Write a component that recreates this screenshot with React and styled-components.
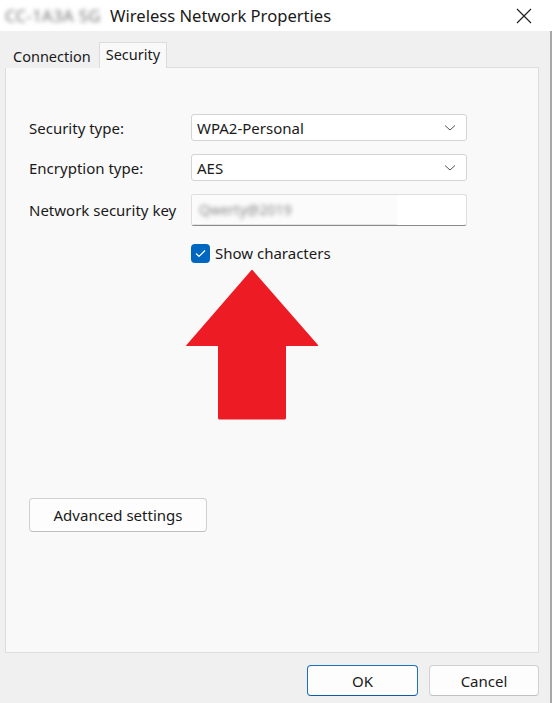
import React from 'react';
import styled, { createGlobalStyle } from 'styled-components';

const GlobalStyle = createGlobalStyle`
  html, body {
    margin: 0;
    padding: 0;
    background: #f0f0f0;
  }
  body {
    font-family: "Noto Sans", "Open Sans", Arial, sans-serif;
    color: #1a1a1a;
  }
`;

const Window = styled.div`
  position: relative;
  width: 552px;
  height: 703px;
  display: flex;
  flex-direction: column;
  overflow: hidden;
`;

const TitleBar = styled.div`
  height: 31px;
  background: #fff;
  display: flex;
  align-items: center;
  padding-left: 5px;
  font-size: 16.6px;
  flex-shrink: 0;
`;

const Blurred = styled.span`
  color: ${p => p.color || '#777'};
  filter: blur(${p => p.amount || 1.6}px);
  margin-right: ${p => p.gap || 0}px;
  letter-spacing: ${p => p.spacing || 0}px;
`;

const CloseBtn = styled.div`
  margin-left: auto;
  width: 46px;
  height: 31px;
  display: flex;
  align-items: center;
  justify-content: center;
  margin-right: 5px;
`;

const Body = styled.div`
  flex: 1;
  background: #f0f0f0;
  border-right: 2px solid #a8a8a8;
  padding: 10px 11px 0 5px;
  display: flex;
  flex-direction: column;
`;

const TabStrip = styled.div`
  display: flex;
  align-items: flex-end;
  height: 26px;
`;

const Tab = styled.div`
  font-size: 14.5px;
  padding: 0 ${p => (p.active ? 6 : 7)}px;
  height: ${p => (p.active ? 26 : 24)}px;
  line-height: ${p => (p.active ? 23 : 22)}px;
  background: ${p => (p.active ? '#f9f9f9' : '#f0f0f0')};
  border: 1px solid ${p => (p.active ? '#dcdcdc' : 'transparent')};
  border-bottom: none;
  margin-bottom: -1px;
  position: relative;
  z-index: 1;
  box-sizing: border-box;
`;

const Panel = styled.div`
  height: 586px;
  background: #f9f9f9;
  border: 1px solid #dcdcdc;
  box-sizing: border-box;
  padding: 46px 0 0 23px;
  display: flex;
  flex-direction: column;
`;

const FormGrid = styled.div`
  display: grid;
  grid-template-columns: 162px 276px;
  row-gap: 13px;
  align-items: center;
`;

const Label = styled.div`
  font-size: 15px;
  color: #1a1a1a;
`;

const SelectBox = styled.div`
  height: 27px;
  background: #fff;
  border: 1px solid #d4d4d4;
  border-radius: 3px;
  box-sizing: border-box;
  display: flex;
  align-items: center;
  padding: 0 10px 0 5px;
  font-size: 15px;
`;

const Chevron = styled.svg`
  margin-left: auto;
`;

const KeyInput = styled.div`
  height: 32px;
  background: #fff;
  border: 1px solid #dedede;
  border-bottom: 1px solid #8a8a8a;
  border-radius: 3px;
  box-sizing: border-box;
  display: flex;
  align-items: center;
  font-size: 14px;
  overflow: hidden;
`;

const KeyMask = styled.div`
  width: 205px;
  height: 100%;
  display: flex;
  align-items: center;
  padding-left: 7px;
  box-sizing: border-box;
  background: #fbfbfb;
  border-bottom: 1px solid #e4e4e4;
`;

const CheckRow = styled.div`
  grid-column: 2;
  display: flex;
  align-items: center;
  gap: 5px;
  font-size: 15px;
  margin-top: 4px;
`;

const CheckBox = styled.div`
  width: 19px;
  height: 19px;
  border-radius: 4px;
  background: #0067c0;
  display: flex;
  align-items: center;
  justify-content: center;
`;

const Button = styled.button`
  font-family: inherit;
  font-size: 15px;
  color: #1a1a1a;
  background: #fdfdfd;
  border: 1px solid ${p => (p.primary ? '#1f6fbf' : '#d0d0d0')};
  border-bottom-color: ${p => (p.primary ? '#0f5aa8' : '#c0c0c0')};
  border-radius: 4px;
  width: ${p => p.width}px;
  height: ${p => p.height}px;
  padding: 0;
`;

const AdvancedWrap = styled.div`
  margin-top: 235px;
  margin-left: 0;
`;

const Footer = styled.div`
  display: flex;
  justify-content: flex-end;
  gap: 11px;
  padding-top: 12px;
`;

const Arrow = styled.svg`
  position: absolute;
  left: 184px;
  top: 268px;
`;

export default function App() {
  return (
    <>
      <GlobalStyle />
      <Window>
        <TitleBar>
          <Blurred gap={9} amount={2} spacing={0.4}>CC-1A3A 5G</Blurred>
          <span>Wireless Network Properties</span>
          <CloseBtn>
            <svg width="16" height="16" viewBox="0 0 16 16">
              <path d="M1 1 L15 15 M15 1 L1 15" stroke="#222" strokeWidth="1.2" />
            </svg>
          </CloseBtn>
        </TitleBar>
        <Body>
          <TabStrip>
            <Tab>Connection</Tab>
            <Tab active>Security</Tab>
          </TabStrip>
          <Panel>
            <FormGrid>
              <Label>Security type:</Label>
              <SelectBox>
                WPA2-Personal
                <Chevron width="12" height="8" viewBox="0 0 12 8">
                  <path d="M1 1.5 L6 6 L11 1.5" fill="none" stroke="#555" strokeWidth="1" />
                </Chevron>
              </SelectBox>
              <Label>Encryption type:</Label>
              <SelectBox>
                AES
                <Chevron width="12" height="8" viewBox="0 0 12 8">
                  <path d="M1 1.5 L6 6 L11 1.5" fill="none" stroke="#555" strokeWidth="1" />
                </Chevron>
              </SelectBox>
              <Label>Network security key</Label>
              <KeyInput>
                <KeyMask>
                  <Blurred color="#888" amount={2.3}>Qwerty@2019</Blurred>
                </KeyMask>
              </KeyInput>
              <CheckRow>
                <CheckBox>
                  <svg width="11" height="9" viewBox="0 0 11 9">
                    <path d="M1 4.5 L4 7.5 L10 1.5" fill="none" stroke="#fff" strokeWidth="1.2" />
                  </svg>
                </CheckBox>
                Show characters
              </CheckRow>
            </FormGrid>
            <AdvancedWrap>
              <Button width={178} height={34}>Advanced settings</Button>
            </AdvancedWrap>
          </Panel>
          <Footer>
            <Button primary width={111} height={31}>OK</Button>
            <Button width={110} height={31}>Cancel</Button>
          </Footer>
        </Body>
        <Arrow width="136" height="154" viewBox="0 0 136 154">
          <path
            d="M68.5 2 L134 77 Q134.5 78 133 78 L102 78 L102 150 Q102 151.5 100.5 151.5 L35.5 151.5 Q34 151.5 34 150 L34 78 L3 78 Q1.5 78 2.5 77 L67.5 2 Q68 1.4 68.5 2 Z"
            fill="#ed1c24"
          />
        </Arrow>
      </Window>
    </>
  );
}
